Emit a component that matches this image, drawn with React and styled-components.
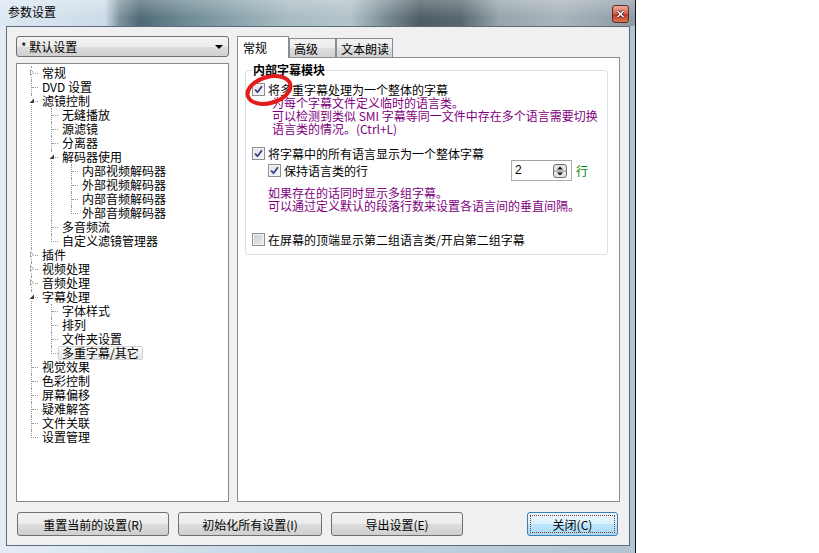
import styled, { createGlobalStyle } from 'styled-components';

const GlobalStyle = createGlobalStyle`
  html, body { margin: 0; padding: 0; background: #ffffff; }
  body {
    font-family: "Noto Sans CJK SC", "Liberation Sans", sans-serif;
    font-size: 12px;
    color: #000;
  }
  * { box-sizing: border-box; }
`;

const tree = [
  { label: '常规', collapsed: true },
  { label: 'DVD 设置' },
  {
    label: '滤镜控制',
    children: [
      { label: '无缝播放' },
      { label: '源滤镜' },
      { label: '分离器' },
      {
        label: '解码器使用',
        children: [
          { label: '内部视频解码器' },
          { label: '外部视频解码器' },
          { label: '内部音频解码器' },
          { label: '外部音频解码器' },
        ],
      },
      { label: '多音频流' },
      { label: '自定义滤镜管理器' },
    ],
  },
  { label: '插件', collapsed: true },
  { label: '视频处理', collapsed: true },
  { label: '音频处理', collapsed: true },
  {
    label: '字幕处理',
    children: [
      { label: '字体样式' },
      { label: '排列' },
      { label: '文件夹设置' },
      { label: '多重字幕/其它', selected: true },
    ],
  },
  { label: '视觉效果' },
  { label: '色彩控制' },
  { label: '屏幕偏移' },
  { label: '疑难解答' },
  { label: '文件关联' },
  { label: '设置管理' },
];

const Window = styled.div`
  width: 636px;
  height: 553px;
  display: flex;
  flex-direction: column;
  padding: 0 5px 7px 6px;
  border-right: 1px solid #111;
  background: linear-gradient(90deg, #e4edf5 0%, #c9d9e6 40%, #b3c3cf 100%);
`;

const TitleBar = styled.div`
  height: 26px;
  margin: 0 -5px 0 -6px;
  padding: 5px 6px 0 8px;
  display: flex;
  align-items: flex-start;
  justify-content: space-between;
  background:
    linear-gradient(180deg, rgba(255, 255, 255, 0.25), rgba(255, 255, 255, 0) 70%),
    linear-gradient(90deg, #dce8f3 0px, #cddce8 105px, #7b919c 120px, #4f6a77 140px,
      #6a8791 180px, #8ca6ae 240px, #a9bcc3 290px, #b3c3c9 350px, #7c8d96 385px,
      #4e5c64 420px, #58666e 460px, #97a5ac 500px, #a8b4bb 560px, #8d9ba6 636px);
`;

const Title = styled.span`
  font-size: 12px;
  line-height: 14px;
  color: #000;
`;

const CloseBox = styled.div`
  width: 17px;
  height: 18px;
  border: 1px solid #5e2a22;
  border-radius: 3px;
  display: flex;
  align-items: center;
  justify-content: center;
  background: linear-gradient(180deg, #ecaa98 0%, #d7664e 48%, #c2381f 52%, #d97555 100%);
`;

const Client = styled.div`
  flex: 1;
  display: flex;
  flex-direction: column;
  border: 1px solid #5b6b7b;
  background: #f0f0f0;
  padding: 9px 9px 9px 9px;
`;

const Main = styled.div`
  flex: 1;
  display: flex;
  gap: 8px;
  min-height: 0;
`;

const LeftColumn = styled.div`
  width: 213px;
  display: flex;
  flex-direction: column;
  gap: 6px;
`;

const Combo = styled.div`
  height: 21px;
  display: flex;
  align-items: center;
  justify-content: space-between;
  padding: 0 5px 0 4px;
  border: 1px solid #707070;
  border-radius: 3px;
  line-height: 14px;
  background: linear-gradient(180deg, #f4f4f4 0%, #ebebeb 50%, #dddddd 51%, #cfcfcf 100%);
`;

const ComboArrow = styled.span`
  width: 0;
  height: 0;
  border-left: 4px solid transparent;
  border-right: 4px solid transparent;
  border-top: 4px solid #000;
`;

const TreeBox = styled.div`
  flex: 1;
  border: 1px solid #828790;
  background: #fff;
  padding: 2px 0 0 14px;
  overflow: hidden;
`;

const TreeList = styled.ul`
  margin: 0 0 0 ${(p) => p.$indent || 0}px;
  padding: 0;
  list-style: none;
`;

const Item = styled.li`
  border-left: ${(p) => (p.$last ? 'none' : '1px dotted #9a9a9a')};
`;

const Row = styled.div`
  height: 14px;
  display: flex;
  align-items: flex-start;
`;

const Connector = styled.span`
  width: ${(p) => (p.$last ? 7 : 6)}px;
  height: 8px;
  flex-shrink: 0;
  display: flex;
  align-items: flex-start;
  border-bottom: 1px dotted #9a9a9a;
  border-left: ${(p) => (p.$last ? '1px dotted #9a9a9a' : 'none')};
`;

const Expander = styled.span`
  width: 7px;
  height: 9px;
  flex-shrink: 0;
  margin: 2px 0 0 ${(p) => (p.$last ? -5 : -4)}px;
  background: #fff;
  display: flex;
`;

const Label = styled.span`
  height: 14px;
  padding: 0 3px;
  line-height: 12px;
  white-space: nowrap;
  border: 1px solid ${(p) => (p.$selected ? '#d2d2d2' : 'transparent')};
  border-radius: 2px;
  background: ${(p) => (p.$selected ? 'linear-gradient(180deg, #fbfbfb, #e6e6e6)' : 'transparent')};
`;

const RightColumn = styled.div`
  flex: 1;
  display: flex;
  flex-direction: column;
`;

const TabStrip = styled.div`
  height: 21px;
  display: flex;
  align-items: flex-end;
`;

const Tab = styled.div`
  width: ${(p) => p.$width}px;
  height: ${(p) => (p.$active ? 22 : 19)}px;
  margin-bottom: ${(p) => (p.$active ? -1 : 0)}px;
  padding: ${(p) => (p.$active ? '4px 0 0 5px' : '3px 0 0 4px')};
  line-height: 14px;
  border: 1px solid #898c95;
  border-bottom: none;
  position: relative;
  z-index: ${(p) => (p.$active ? 1 : 0)};
  background: ${(p) =>
    p.$active
      ? '#ffffff'
      : 'linear-gradient(180deg, #f3f3f3 0%, #ebebeb 50%, #dddddd 51%, #d2d2d2 100%)'};
`;

const Panel = styled.div`
  flex: 1;
  border: 1px solid #898c95;
  background: #ffffff;
  padding: 0;
`;

const Group = styled.fieldset`
  margin: 5px 11px 0 7px;
  padding: 0 6px 8px 6px;
  min-width: 0;
  border: 1px solid #d5dfe5;
  border-radius: 3px;
  display: flex;
  flex-direction: column;
`;

const Legend = styled.legend`
  padding: 0 1px;
  line-height: 14px;
  font-weight: bold;
`;

const CheckRow = styled.div`
  position: relative;
  display: flex;
  align-items: center;
  gap: 3px;
  min-height: ${(p) => p.$height || 13}px;
  margin: ${(p) => p.$top || 0}px 0 0 ${(p) => p.$indent || 0}px;
  line-height: 13px;
`;

const Box = styled.span`
  width: 13px;
  height: 13px;
  flex-shrink: 0;
  border: 1px solid #8e8f8f;
  display: flex;
  align-items: center;
  justify-content: center;
  background: ${(p) =>
    p.$checked
      ? 'linear-gradient(135deg, #dfe2e8 0%, #f7f7f7 100%)'
      : 'linear-gradient(135deg, #c9ccd2 0%, #eeeeee 100%)'};
  box-shadow: inset 0 0 0 1px #f4f4f4;
`;

const Note = styled.div`
  margin: ${(p) => p.$top || 0}px 0 0 ${(p) => p.$indent}px;
  line-height: 13px;
  color: #800080;
  white-space: nowrap;
`;

const SpinGroup = styled.div`
  margin-left: auto;
  margin-right: 13px;
  display: flex;
  align-items: center;
  gap: 4px;
`;

const SpinBox = styled.div`
  width: 61px;
  height: 21px;
  display: flex;
  align-items: center;
  padding: 0 4px 0 3px;
  border: 1px solid #abadb3;
  border-top-color: #a0a3aa;
  background: #fff;
`;

const SpinValue = styled.span`
  flex: 1;
  font-family: "Liberation Sans", sans-serif;
`;

const Unit = styled.span`
  color: #008000;
`;

const Ring = styled.svg`
  position: absolute;
  left: -9px;
  top: -11px;
  pointer-events: none;
`;

const ButtonRow = styled.div`
  margin-top: 10px;
  height: 24px;
  display: flex;
  gap: 9px;
  padding: 0 2px 0 1px;
`;

const Button = styled.button`
  width: ${(p) => p.$width}px;
  height: 24px;
  margin-left: ${(p) => (p.$push ? 'auto' : '0')};
  padding: 0;
  font-family: inherit;
  font-size: 12px;
  color: #000;
  border-radius: 3px;
  border: 1px solid ${(p) => (p.$default ? '#3c7fb1' : '#707070')};
  background: ${(p) =>
    p.$default
      ? 'linear-gradient(180deg, #eaf6fd 0%, #d9f0fc 50%, #bee6fd 51%, #a7d9f5 100%)'
      : 'linear-gradient(180deg, #f2f2f2 0%, #ebebeb 50%, #dddddd 51%, #cfcfcf 100%)'};
  outline: ${(p) => (p.$default ? '1px dotted #8a3626' : 'none')};
  outline-offset: -4px;
`;

const Check = () => (
  <svg width="9" height="9" viewBox="0 0 9 9">
    <path d="M1 4.5 L3.5 7.2 L8 1.2" fill="none" stroke="#34458a" strokeWidth="1.8" />
  </svg>
);

const CheckItem = ({ checked, children, ...rest }) => (
  <CheckRow {...rest}>
    <Box $checked={checked}>{checked && <Check />}</Box>
    <span>{children}</span>
  </CheckRow>
);

const TreeNode = ({ node, last }) => (
  <Item $last={last}>
    <Row>
      <Connector $last={last}>
        {(node.children || node.collapsed) && (
          <Expander $last={last}>
            <svg width="7" height="9" viewBox="0 0 7 9">
              {node.children ? (
                <path d="M6 2.5 L6 7 L1.5 7 Z" fill="#3c3c3c" />
              ) : (
                <path d="M2.5 1.5 L5.5 4.5 L2.5 7.5 Z" fill="#fff" stroke="#a8a8a8" />
              )}
            </svg>
          </Expander>
        )}
      </Connector>
      <Label $selected={node.selected}>{node.label}</Label>
    </Row>
    {node.children && (
      <TreeList $indent={last ? 20 : 19}>
        {node.children.map((child, i) => (
          <TreeNode key={child.label} node={child} last={i === node.children.length - 1} />
        ))}
      </TreeList>
    )}
  </Item>
);

export default function App() {
  return (
    <>
      <GlobalStyle />
      <Window>
        <TitleBar>
          <Title>参数设置</Title>
          <CloseBox>
            <svg width="9" height="8" viewBox="0 0 9 8">
              <path d="M1.5 1 L7.5 7 M7.5 1 L1.5 7" stroke="#3a1410" strokeWidth="3" />
              <path d="M1.5 1 L7.5 7 M7.5 1 L1.5 7" stroke="#ffffff" strokeWidth="1.6" />
            </svg>
          </CloseBox>
        </TitleBar>
        <Client>
          <Main>
            <LeftColumn>
              <Combo>
                <span>* 默认设置</span>
                <ComboArrow />
              </Combo>
              <TreeBox>
                <TreeList>
                  {tree.map((node, i) => (
                    <TreeNode key={node.label} node={node} last={i === tree.length - 1} />
                  ))}
                </TreeList>
              </TreeBox>
            </LeftColumn>
            <RightColumn>
              <TabStrip>
                <Tab $active $width={52}>常规</Tab>
                <Tab $width={47}>高级</Tab>
                <Tab $width={57}>文本朗读</Tab>
              </TabStrip>
              <Panel>
                <Group>
                  <Legend>内部字幕模块</Legend>
                  <CheckItem checked $top={6}>
                    将多重字幕处理为一个整体的字幕
                    <Ring width="56" height="36" viewBox="0 0 56 36">
                      <ellipse
                        cx="26"
                        cy="18"
                        rx="22"
                        ry="13"
                        transform="rotate(-16 26 18)"
                        fill="none"
                        stroke="#e31b1b"
                        strokeWidth="4"
                      />
                    </Ring>
                  </CheckItem>
                  <Note $indent={20}>
                    为每个字幕文件定义临时的语言类。
                    <br />
                    可以检测到类似 SMI 字幕等同一文件中存在多个语言需要切换
                    <br />
                    语言类的情况。(Ctrl+L)
                  </Note>
                  <CheckItem checked $top={12}>
                    将字幕中的所有语言显示为一个整体字幕
                  </CheckItem>
                  <CheckRow $indent={16} $height={21}>
                    <Box $checked>
                      <Check />
                    </Box>
                    <span>保持语言类的行</span>
                    <SpinGroup>
                      <SpinBox>
                        <SpinValue>2</SpinValue>
                        <svg width="14" height="14" viewBox="0 0 14 14">
                          <rect x="0.5" y="0.5" width="13" height="13" rx="2.5" fill="#e4e4e4" stroke="#6f6f6f" />
                          <line x1="1" y1="7" x2="13" y2="7" stroke="#8a8a8a" />
                          <path d="M4 5.5 L7 2.5 L10 5.5 Z" fill="#111" />
                          <path d="M4 8.5 L7 11.5 L10 8.5 Z" fill="#111" />
                        </svg>
                      </SpinBox>
                      <Unit>行</Unit>
                    </SpinGroup>
                  </CheckRow>
                  <Note $indent={16} $top={5}>
                    如果存在的话同时显示多组字幕。
                    <br />
                    可以通过定义默认的段落行数来设置各语言间的垂直间隔。
                  </Note>
                  <CheckItem $top={21}>在屏幕的顶端显示第二组语言类/开启第二组字幕</CheckItem>
                </Group>
              </Panel>
            </RightColumn>
          </Main>
          <ButtonRow>
            <Button $width={152}>重置当前的设置(R)</Button>
            <Button $width={144}>初始化所有设置(I)</Button>
            <Button $width={132}>导出设置(E)</Button>
            <Button $width={91} $push $default>
              关闭(C)
            </Button>
          </ButtonRow>
        </Client>
      </Window>
    </>
  );
}
